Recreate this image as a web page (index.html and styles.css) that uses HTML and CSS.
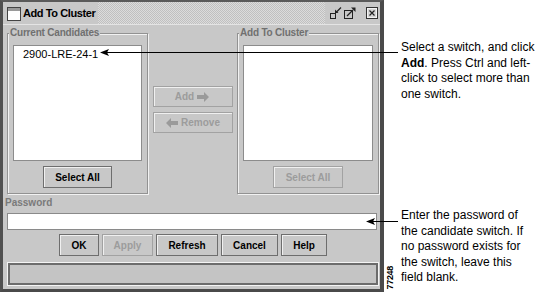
FILE: index.html
```html
<!DOCTYPE html>
<html lang="en">
<head>
    <meta charset="UTF-8">
    <title>Add To Cluster</title>
    <link rel="stylesheet" href="styles.css">
</head>
<body>
    <div class="page">
        <div class="window">
            <!-- Title bar -->
            <div class="titlebar">
                <div class="title">
                    <svg class="app-icon" width="14" height="14" viewBox="0 0 14 14">
                        <rect x="0.5" y="0.5" width="13" height="13" fill="#fff" stroke="#444"/>
                        <rect x="1" y="1" width="12" height="3" fill="#9a9a9a"/>
                    </svg>
                    <span>Add To Cluster</span>
                </div>
                <div class="hatch"></div>
                <div class="controls">
                    <svg class="ctl ctl-min" width="12" height="12" viewBox="0 0 12 12">
                        <rect x="0.5" y="6.5" width="5" height="5" fill="none" stroke="#222"/>
                        <line x1="11" y1="0.5" x2="6.5" y2="5" stroke="#222" stroke-width="1.3"/>
                        <polygon points="5,6 5,2.5 8.5,6" fill="#222"/>
                    </svg>
                    <svg class="ctl ctl-max" width="12" height="12" viewBox="0 0 12 12">
                        <rect x="0.5" y="3.5" width="8" height="8" fill="none" stroke="#222"/>
                        <line x1="3" y1="9" x2="9" y2="3" stroke="#222" stroke-width="1.3"/>
                        <polygon points="11.5,0.5 11.5,5 7,0.5" fill="#222"/>
                    </svg>
                    <svg class="ctl ctl-close" width="12" height="12" viewBox="0 0 12 12">
                        <rect x="0.5" y="0.5" width="11" height="11" fill="#d4d4d4" stroke="#333"/>
                        <rect x="1.5" y="1.5" width="9" height="9" fill="none" stroke="#f2f2f2"/>
                        <path d="M3.5 3.5 L8.5 8.5 M8.5 3.5 L3.5 8.5" stroke="#222" stroke-width="1.2"/>
                    </svg>
                </div>
            </div>

            <div class="content">
                <div class="lists">
                    <fieldset class="group group-left">
                        <legend>Current Candidates</legend>
                        <ul class="list">
                            <li>2900-LRE-24-1</li>
                        </ul>
                        <button class="btn btn-select">Select All</button>
                    </fieldset>

                    <div class="move">
                        <button class="btn btn-move disabled">Add
                            <svg width="13" height="10" viewBox="0 0 13 10"><polygon points="0,3 7,3 7,0 12,5 7,10 7,7 0,7" fill="#9a9a9a"/></svg>
                        </button>
                        <button class="btn btn-move disabled">
                            <svg width="13" height="10" viewBox="0 0 13 10"><polygon points="13,3 6,3 6,0 1,5 6,10 6,7 13,7" fill="#9a9a9a"/></svg>
                            Remove</button>
                    </div>

                    <fieldset class="group group-right">
                        <legend>Add To Cluster</legend>
                        <ul class="list"></ul>
                        <button class="btn btn-select disabled">Select All</button>
                    </fieldset>
                </div>

                <label class="pw-label" for="pw">Password</label>
                <input class="pw" id="pw" type="password">

                <div class="actions">
                    <button class="btn btn-ok">OK</button>
                    <button class="btn btn-apply disabled">Apply</button>
                    <button class="btn btn-refresh">Refresh</button>
                    <button class="btn btn-cancel">Cancel</button>
                    <button class="btn btn-help">Help</button>
                </div>

                <div class="status"><div class="status-inner"></div></div>
            </div>
        </div>

        <div class="gutter"><span class="fig">77248</span></div>

        <div class="notes">
            <p class="note note-first">Select a switch, and click<br><b>Add</b>. Press Ctrl and left-<br>click to select more than<br>one switch.</p>
            <p class="note note-second">Enter the password of<br>the candidate switch. If<br>no password exists for<br>the switch, leave this<br>field blank.</p>
        </div>

        <!-- callout arrows drawn over the dialog -->
        <svg class="callouts" width="538" height="292" viewBox="0 0 538 292">
            <line x1="106" y1="52.5" x2="398" y2="52.5" stroke="#000" stroke-width="1"/>
            <polygon points="100,52.5 109,49 107,52.5 109,56" fill="#000"/>
            <line x1="372" y1="221.5" x2="398" y2="221.5" stroke="#000" stroke-width="1"/>
            <polygon points="366,221.5 375,218 373,221.5 375,225" fill="#000"/>
        </svg>
    </div>
</body>
</html>
```

FILE: styles.css
```css
body {
    margin: 0;
    background: #fff;
    font-family: "Liberation Sans", Arial, sans-serif;
}

.page {
    position: relative;
    display: flex;
    width: 538px;
    height: 292px;
    overflow: hidden;
}

/* Dialog window */
.window {
    width: 384px;
    height: 292px;
    box-sizing: border-box;
    flex: none;
    background: #c8c8c8;
    border-left: 3px solid #505050;
    border-top: 2px solid #5a5a5a;
    border-right: 4px solid #4a4a4a;
    border-bottom: 3px solid #4a4a4a;
}

.titlebar {
    display: flex;
    height: 22px;
    border-bottom: 1px solid #e4e4e4;
    background: repeating-conic-gradient(#c0c0c0 0 25%, #dcdcdc 0 50%) 0 0 / 2px 2px;
}

.title {
    display: flex;
    align-items: center;
    gap: 2px;
    padding: 0 3px 0 4px;
    background: #c8c8c8;
    font-size: 11px;
    font-weight: bold;
    letter-spacing: -0.4px;
    color: #000;
}

.app-icon {
    margin-top: 2px;
}

.hatch {
    flex: 1;
}

.controls {
    display: flex;
    align-items: center;
    padding: 0 2px 0 5px;
    background: #c8c8c8;
}

.ctl-min {
    margin-right: 2px;
}

.ctl-max {
    margin-right: 10px;
}

.content {
    padding: 2px 1px 0 4px;
}

.lists {
    display: flex;
}

/* Group boxes */
.group {
    margin: 0;
    min-width: 0;
    box-sizing: border-box;
    border: 1px solid #929292;
    box-shadow: 1px 1px 0 #f2f2f2, inset 1px 1px 0 #f2f2f2;
    padding: 6px 5px 5px 5px;
}

.group-left {
    width: 141px;
}

.group-right {
    width: 142px;
}

.group legend {
    margin-left: -4px;
    padding: 0 1px;
    background: #c8c8c8;
    font-size: 10px;
    line-height: 12px;
    font-weight: bold;
    letter-spacing: -0.2px;
    color: #707070;
}

.list {
    margin: 0;
    padding: 1px 0 0 9px;
    list-style: none;
    height: 116px;
    box-sizing: border-box;
    background: #fff;
    border: 1px solid #8c8c8c;
    font-size: 11px;
    line-height: 14px;
    color: #000;
}

/* Buttons */
.btn {
    display: flex;
    align-items: center;
    justify-content: center;
    gap: 3px;
    box-sizing: border-box;
    height: 22px;
    padding: 0;
    background: #c8c8c8;
    border: 1px solid #6e6e6e;
    box-shadow: inset 1px 1px 0 #f0f0f0;
    font-family: "Liberation Sans", Arial, sans-serif;
    font-size: 10px;
    font-weight: bold;
    color: #000;
}

.btn.disabled {
    border-color: #a2a2a2;
    color: #9c9c9c;
}

.btn-select {
    width: 69px;
    margin: 5px auto 0;
}

.group-right .btn-select {
    width: 70px;
}

.move {
    width: 89px;
    display: flex;
    flex-direction: column;
    align-items: center;
    gap: 5px;
    padding-top: 59px;
}

.btn-move {
    width: 80px;
    height: 21px;
}

/* Password */
.pw-label {
    display: block;
    margin: 3px 0 0 -2px;
    font-size: 10px;
    line-height: 12px;
    font-weight: bold;
    color: #7a7a7a;
}

.pw {
    display: block;
    width: 370px;
    height: 17px;
    box-sizing: border-box;
    margin: 4px 0 0;
    padding: 0;
    background: #fff;
    border: 1px solid #8a8a8a;
    outline: none;
}

.actions {
    display: flex;
    justify-content: center;
    gap: 3px;
    margin-top: 4px;
}

.btn-ok { width: 40px; }
.btn-apply { width: 51px; }
.btn-refresh { width: 62px; }
.btn-cancel { width: 57px; }
.btn-help { width: 46px; }

/* Status bar */
.status {
    margin-top: 6px;
    width: 372px;
    height: 24px;
    box-sizing: border-box;
    border: 1px solid #f4f4f4;
}

.status-inner {
    height: 100%;
    box-sizing: border-box;
    border: 2px solid #6c6c6c;
    background: #c4c4c4;
}

/* Right-hand annotations */
.gutter {
    width: 17px;
    flex: none;
    display: flex;
    flex-direction: column;
    justify-content: flex-end;
    align-items: flex-start;
    padding-bottom: 2px;
    box-sizing: border-box;
}

.fig {
    margin-left: 1px;
    writing-mode: vertical-rl;
    transform: rotate(180deg);
    font-size: 9px;
    font-weight: bold;
    letter-spacing: -0.3px;
    color: #000;
}

.notes {
    flex: 1;
}

.note {
    margin: 0;
    font-size: 12px;
    line-height: 15.5px;
    color: #000;
    white-space: nowrap;
}

.note-first {
    margin-top: 40px;
}

.note-second {
    margin-top: 106px;
}

.callouts {
    position: absolute;
    top: 0;
    left: 0;
    pointer-events: none;
}
```
